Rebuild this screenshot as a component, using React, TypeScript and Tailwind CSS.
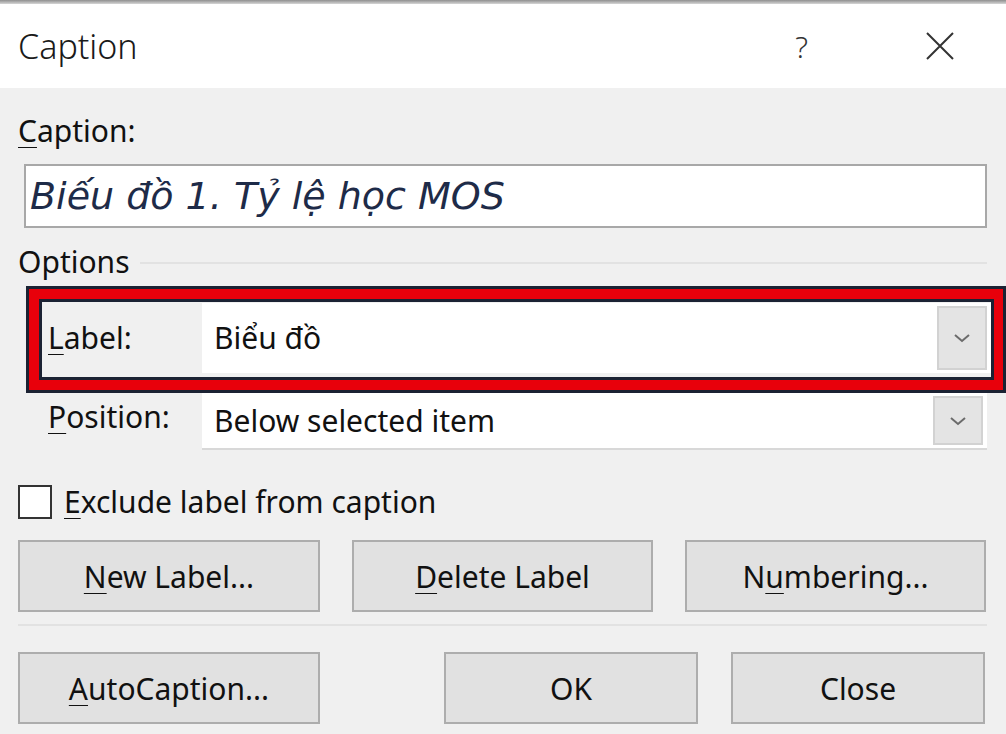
import { ReactNode } from "react";

const UI_FONT = "font-['Noto_Sans',sans-serif]";

function Key({ children }: { children: ReactNode }) {
  return <span className="underline decoration-1 underline-offset-[5px]">{children}</span>;
}

function Chevron() {
  return (
    <svg width="18" height="10" viewBox="0 0 18 10" fill="none">
      <polyline points="2,2 9,8 16,2" stroke="#6b6b6b" strokeWidth="2" />
    </svg>
  );
}

function Combo({ value, className = "" }: { value: string; className?: string }) {
  return (
    <div className={`flex items-center bg-white ${className}`}>
      <span className="flex-1 pl-[12px] text-[30px] leading-[36px] text-[#111]">{value}</span>
      <div className="flex h-[calc(100%-6px)] w-[50px] items-center justify-center bg-[#e4e4e4] border-2 border-[#d2d2d2] mr-[4px]">
        <Chevron />
      </div>
    </div>
  );
}

function Btn({ children, className = "" }: { children: ReactNode; className?: string }) {
  return (
    <button className={`h-[72px] bg-[#e1e1e1] border-2 border-[#adadad] text-[30px] text-[#111] ${className}`}>
      {children}
    </button>
  );
}

export default function App() {
  return (
    <div className={`relative w-[1006px] h-[734px] overflow-hidden bg-[#f0f0f0] ${UI_FONT}`}>
      {/* window top edge */}
      <div className="h-[4px] bg-gradient-to-b from-[#8f8f8f] to-[#d6d6d6]" />

      {/* title bar */}
      <div className="flex h-[84px] items-center bg-white pl-[18px] pr-[52px]">
        <span className="flex-1 text-[34px] text-[#1a1a1a] font-light">Caption</span>
        <span className="mr-[118px] text-[30px] text-[#333] font-light">?</span>
        <svg width="28" height="28" viewBox="0 0 28 28">
          <path d="M1 1 L27 27 M27 1 L1 27" stroke="#333" strokeWidth="2" />
        </svg>
      </div>

      <div className="flex flex-col pl-[18px] pr-[19px]">
        <div className="mt-[26px] h-[34px] text-[30px] leading-[34px] text-[#111]">
          <Key>C</Key>aption:
        </div>

        <div className="mt-[16px] ml-[6px] flex h-[64px] items-center bg-white border-2 border-[#a8a8a8] pl-[4px]">
          <span className="font-['DejaVu_Sans',sans-serif] italic text-[38px] leading-[44px] text-[#1e2b48]">
            Biếu đồ 1. Tỷ lệ học MOS
          </span>
        </div>

        <div className="mt-[16px] flex h-[36px] items-center gap-[10px]">
          <span className="text-[30px] leading-[36px] text-[#111]">Options</span>
          <div className="flex-1 h-[2px] bg-[#e2e2e2] mt-[2px]" />
        </div>

        {/* highlighted Label row */}
        <div className="mt-[6px] ml-[8px] -mr-[19px] border-[3px] border-[#1b2233] bg-[#e8000b] p-[10px] pr-[9px]">
          <div className="flex h-[81px] items-start border-[3px] border-[#1b2233] bg-[#f0f0f0]">
            <span className="w-[160px] pl-[6px] mt-[18px] text-[30px] leading-[36px] text-[#111]">
              <Key>L</Key>abel:
            </span>
            <Combo value="Biểu đồ" className="flex-1 h-[70px] mt-[1px]" />
          </div>
        </div>

        <div className="flex h-[57px] items-start">
          <span className="w-[184px] pl-[30px] mt-[6px] text-[30px] leading-[36px] text-[#111]">
            <Key>P</Key>osition:
          </span>
          <Combo value="Below selected item" className="flex-1 h-[57px] border-b-2 border-b-[#d8d8d8]" />
        </div>

        <div className="mt-[35px] flex h-[34px] items-center gap-[12px]">
          <div className="h-[34px] w-[34px] bg-white border-2 border-[#333]" />
          <span className="text-[30px] leading-[36px] text-[#111]">
            <Key>E</Key>xclude label from caption
          </span>
        </div>

        <div className="mt-[21px] flex gap-[32px]">
          <Btn className="w-[302px]">
            <Key>N</Key>ew Label...
          </Btn>
          <Btn className="w-[301px]">
            <Key>D</Key>elete Label
          </Btn>
          <Btn className="w-[301px]">
            N<Key>u</Key>mbering...
          </Btn>
        </div>

        <div className="mt-[12px] h-[2px] bg-[#e2e2e2]" />

        <div className="mt-[26px] flex">
          <Btn className="w-[302px]">
            <Key>A</Key>utoCaption...
          </Btn>
          <Btn className="ml-[124px] w-[254px]">OK</Btn>
          <Btn className="ml-[33px] w-[254px]">Close</Btn>
        </div>
      </div>
    </div>
  );
}
